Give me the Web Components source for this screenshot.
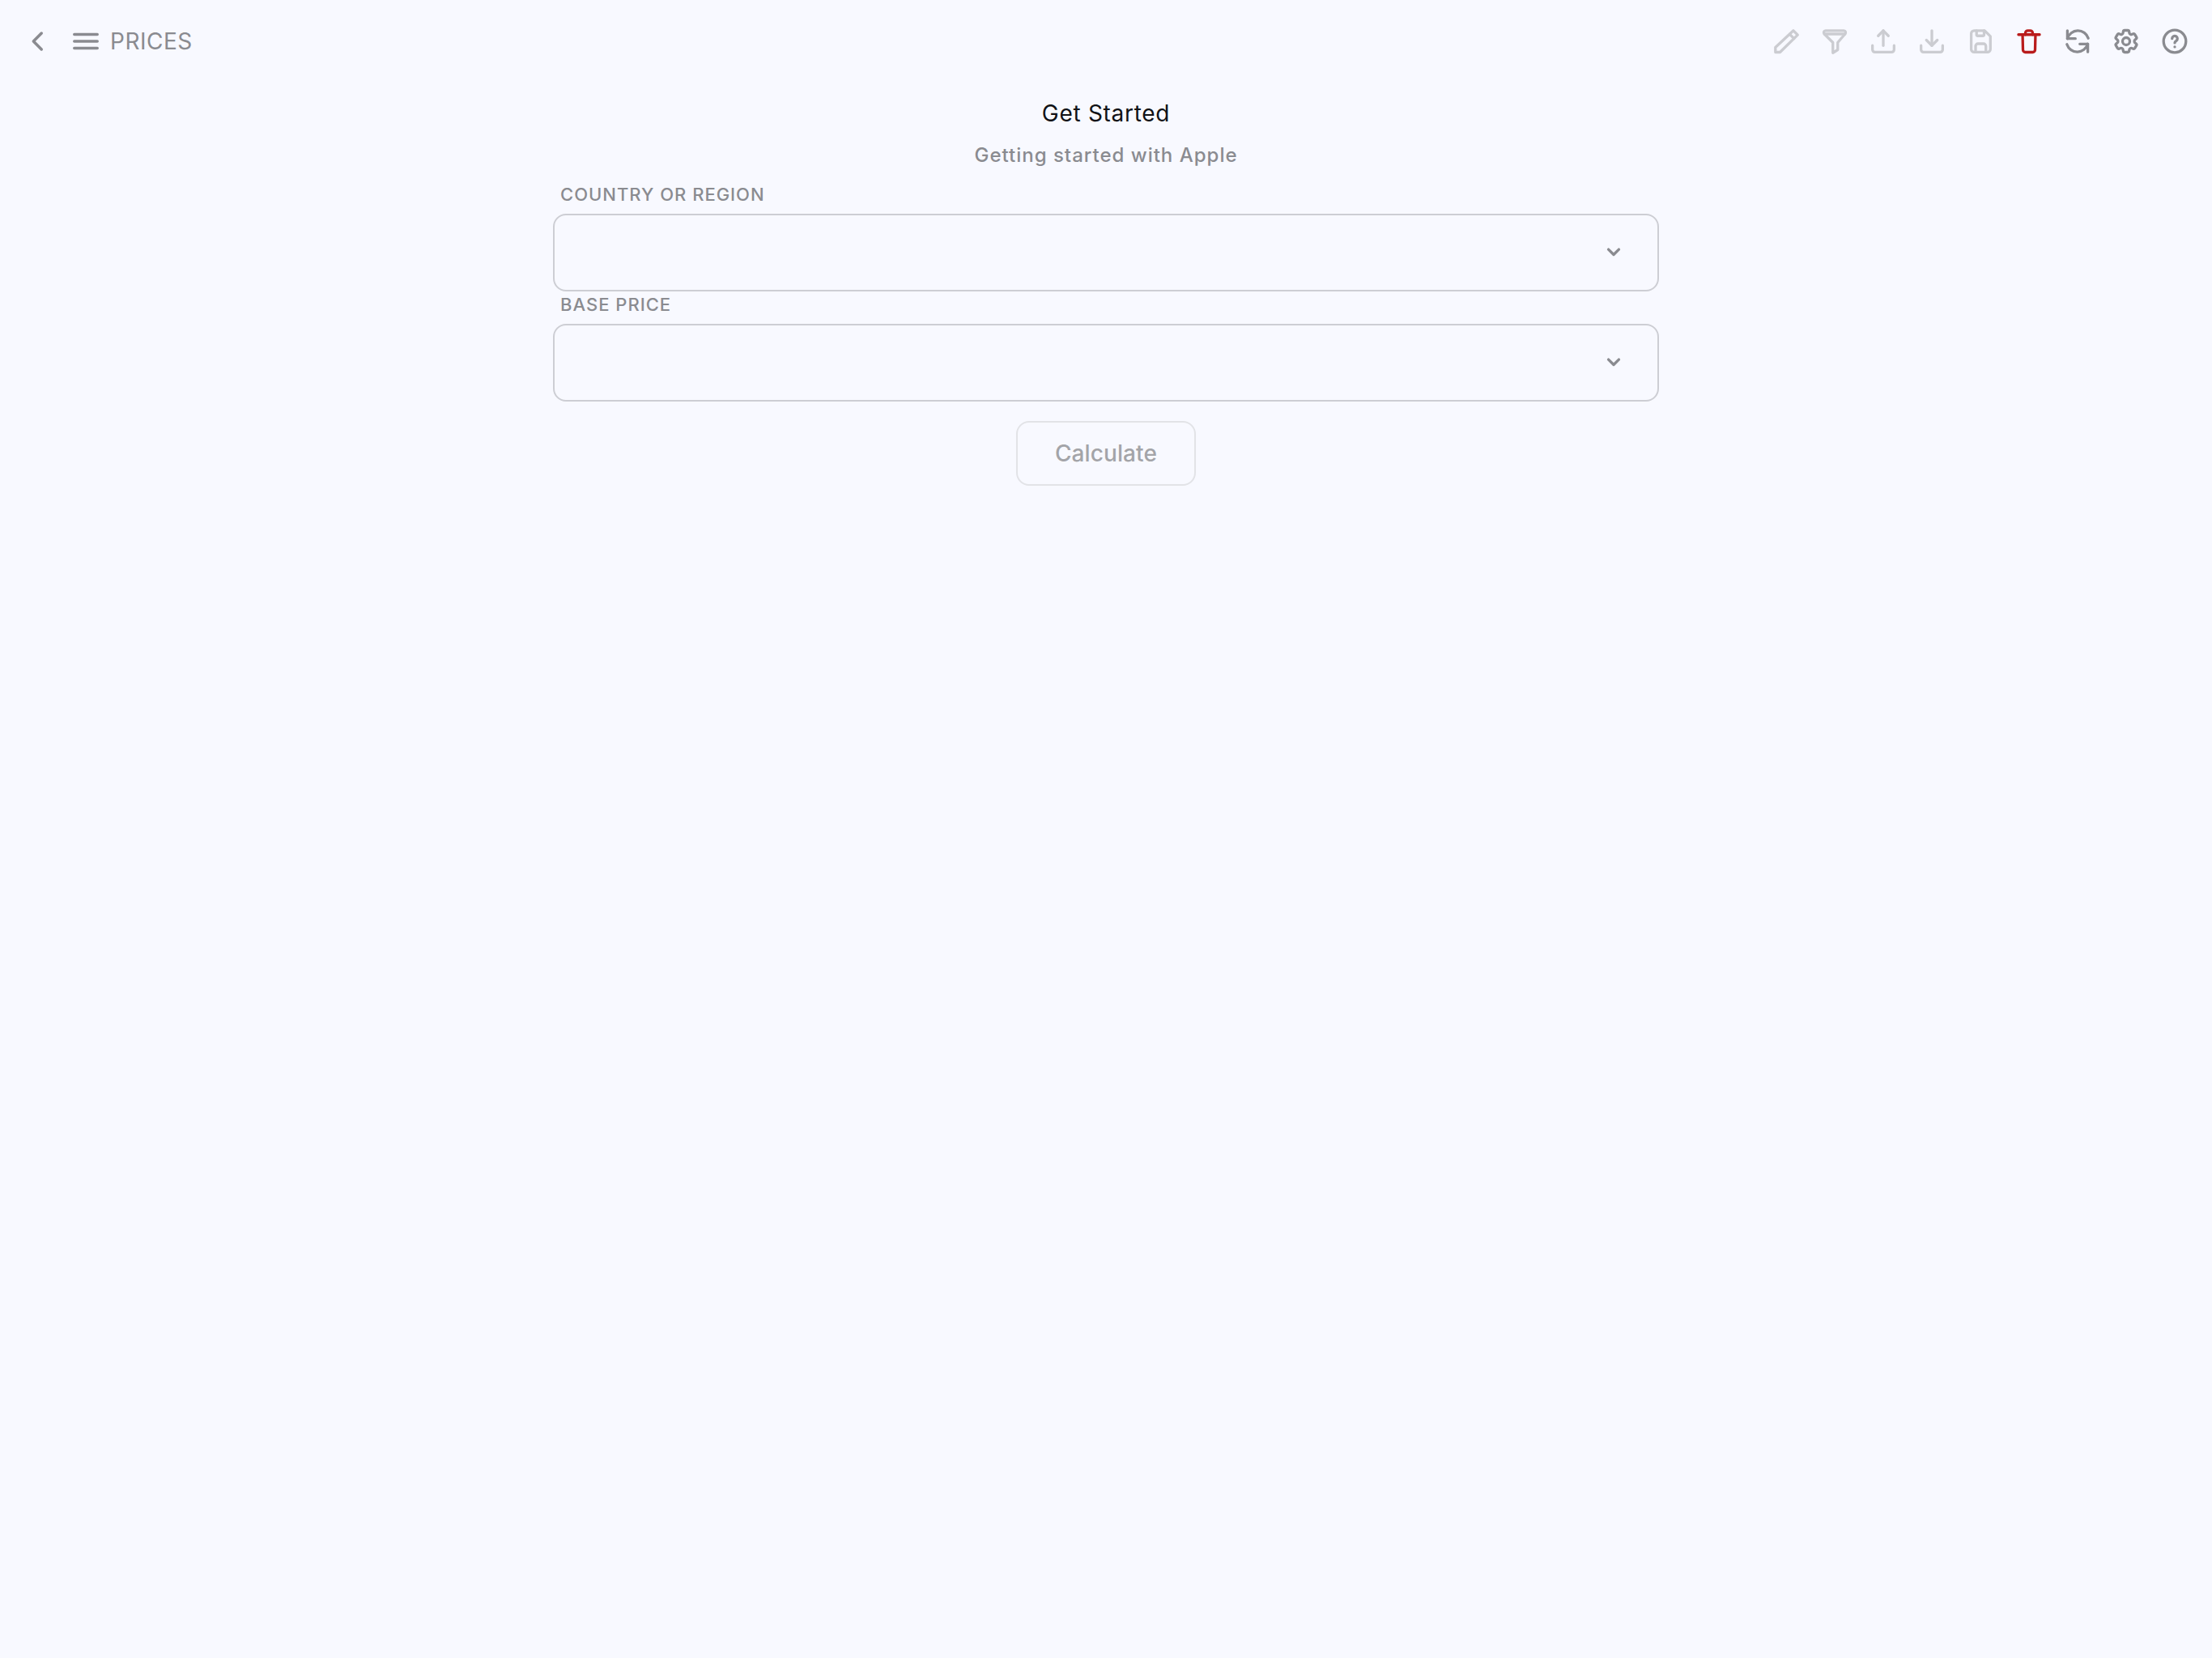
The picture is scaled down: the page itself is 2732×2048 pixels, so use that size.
<!DOCTYPE html>
<html>
<head>
<meta charset="utf-8">
<title>Prices</title>
<style>
    html, body {
        margin: 0;
        height: 100%;
        background: #f8f9ff;
        font-family: Inter, "Liberation Sans", sans-serif;
    }
</style>
</head>
<body>
<prices-page></prices-page>

<script>
const ICONS = {
    back: '<path d="M15 5l-7 7l7 7"/>',
    menu: '<path d="M2.500 6.300h19M2.500 12h19M2.500 17.700h19"/>',
    pencil: '<path d="M3.200 21V17L18 3.200L21.500 6.700L7 21Z"/><path d="M15 6.200L18.500 9.700"/>',
    filter: '<path d="M4.500 3.200H19.500C21 3.200 21.500 5 20.500 6L14.500 13V19L10.500 21.500V13L3.500 6C2.500 5 3 3.200 4.500 3.200Z"/><path d="M3.500 6H20.500"/>',
    upload: '<path d="M3.100 15.500V18.900a2 2 0 0 0 2 2H18.900a2 2 0 0 0 2-2V15.500"/><path d="M7.800 7.500L12 3.200L16.200 7.500"/><path d="M12 3.200V15.500"/>',
    download: '<path d="M3.100 15.500V18.900a2 2 0 0 0 2 2H18.900a2 2 0 0 0 2-2V15.500"/><path d="M7.500 11L12 15.500L16.500 11"/><path d="M12 3.200V15.500"/>',
    save: '<path d="M6.800 3.200H15.500L20.200 7.900V18.500a2.400 2.400 0 0 1-2.400 2.400H6.800a2.400 2.400 0 0 1-2.400-2.400V5.600a2.400 2.400 0 0 1 2.400-2.400Z"/><path d="M8.800 3.200V6.500a1 1 0 0 0 1 1H14a1 1 0 0 0 1-1V3.200"/><path d="M8 20.900V16a2 2 0 0 1 2-2H14.500a2 2 0 0 1 2 2V20.900"/>',
    trash: '<path d="M3.300 6.500H20.700"/><path d="M6.700 6.500L7 19a2 2 0 0 0 2 2H15a2 2 0 0 0 2-2L17.300 6.500"/><path d="M9 6.500V5.200a2 2 0 0 1 2-2H13a2 2 0 0 1 2 2V6.500"/>',
    refresh: '<path d="M3.600 3.200V9.800H10.200"/><path d="M3.600 9.800A9 9 0 0 1 20.800 9.500"/><path d="M20.400 20.800V14.200H13.800"/><path d="M20.400 14.200A9 9 0 0 1 3.200 14.500"/>',
    cog: '<path d="M9.594 3.940c.09-.542.56-.94 1.110-.94h2.593c.55 0 1.020.398 1.110.94l.213 1.281c.063.374.313.686.645.870.074.040.147.083.22.127.325.196.72.257 1.075.124l1.217-.456a1.125 1.125 0 0 1 1.370.49l1.296 2.247a1.125 1.125 0 0 1-.26 1.431l-1.003.827c-.293.241-.438.613-.43.992a7.723 7.723 0 0 1 0 .255c-.008.378.137.75.43.991l1.004.827c.424.35.534.955.26 1.430l-1.298 2.247a1.125 1.125 0 0 1-1.369.491l-1.217-.456c-.355-.133-.75-.072-1.076.124a6.470 6.470 0 0 1-.22.128c-.331.183-.581.495-.644.869l-.213 1.281c-.09.543-.56.94-1.110.94h-2.594c-.55 0-1.019-.398-1.110-.94l-.213-1.281c-.062-.374-.312-.686-.644-.87a6.520 6.520 0 0 1-.22-.127c-.325-.196-.72-.257-1.076-.124l-1.217.456a1.125 1.125 0 0 1-1.369-.49l-1.297-2.247a1.125 1.125 0 0 1 .26-1.431l1.004-.827c.292-.24.437-.613.43-.991a6.932 6.932 0 0 1 0-.255c.007-.38-.138-.751-.43-.992l-1.004-.827a1.125 1.125 0 0 1-.26-1.430l1.297-2.247a1.125 1.125 0 0 1 1.370-.491l1.216.456c.356.133.751.072 1.076-.124.072-.044.146-.086.22-.128.332-.183.582-.495.644-.869l.214-1.280Z"/><circle cx="12" cy="12" r="3"/>',
    help: '<circle cx="12" cy="12" r="9.200"/><path d="M9.800 9.800a2.200 2.200 0 1 1 3.500 1.800c-.8.5-1.300 1-1.300 1.700"/><path d="M12 16.600v.01"/>',
    chevron: '<path d="M6.500 8.700l5.500 5.500l5.500-5.500"/>'
};

class AppIcon extends HTMLElement {
    constructor() {
        super();
        this.attachShadow({mode: 'open'});
    }

    connectedCallback() {
        const name = this.getAttribute('name');
        const size = this.getAttribute('size') || 36;
        const stroke = this.getAttribute('stroke') || 2.2;
        this.shadowRoot.innerHTML = `
            <style>
                :host {
                    display: inline-flex;
                    align-items: center;
                    justify-content: center;
                    color: #8a8b90;
                }
                :host([faded]) { color: #cbccd1; }
                :host([danger]) { color: #b91c1c; }
                svg { display: block; }
            </style>
            <svg width="${size}" height="${size}" viewBox="0 0 24 24" fill="none" stroke="currentColor"
                 stroke-width="${stroke}" stroke-linecap="round" stroke-linejoin="round">${ICONS[name]}</svg>`
    }
}

class TopBar extends HTMLElement {
    constructor() {
        super();
        this.attachShadow({mode: 'open'});
        this.shadowRoot.innerHTML = `
            <style>
                :host {
                    display: flex;
                    align-items: center;
                    justify-content: space-between;
                    height: 102px;
                    padding: 0 28px 0 30px;
                    box-sizing: border-box;
                }
                .left { display: flex; align-items: center; }
                .title {
                    font-size: 28px;
                    letter-spacing: 0.5px;
                    color: #8a8b90;
                    margin-left: 12px;
                }
                .menu { margin-left: 24px; }
                .right { display: flex; align-items: center; gap: 24px; }
            </style>
            <div class="left">
                <app-icon name="back" size="34" stroke="2.500"></app-icon>
                <app-icon class="menu" name="menu" size="36" stroke="2.300"></app-icon>
                <span class="title"><slot></slot></span>
            </div>
            <div class="right">
                <app-icon name="pencil" faded></app-icon>
                <app-icon name="filter" faded></app-icon>
                <app-icon name="upload" faded></app-icon>
                <app-icon name="download" faded></app-icon>
                <app-icon name="save" faded></app-icon>
                <app-icon name="trash" danger></app-icon>
                <app-icon name="refresh"></app-icon>
                <app-icon name="cog"></app-icon>
                <app-icon name="help"></app-icon>
            </div>`
    }
}

class SelectField extends HTMLElement {
    constructor() {
        super();
        this.attachShadow({mode: 'open'});
        this.shadowRoot.innerHTML = `
            <style>
                :host { display: block; }
                label {
                    display: block;
                    height: 40px;
                    line-height: 32px;
                    padding-left: 9px;
                    font-size: 22px;
                    font-weight: 500;
                    letter-spacing: 1px;
                    color: #8a8b90;
                    text-transform: uppercase;
                }
                .box {
                    height: 96px;
                    box-sizing: border-box;
                    border: 2px solid #cdced4;
                    border-radius: 16px;
                    display: flex;
                    align-items: center;
                    justify-content: flex-end;
                    padding-right: 40px;
                }
            </style>
            <label><slot></slot></label>
            <div class="box"><app-icon name="chevron" size="28" stroke="2.900"></app-icon></div>`
    }
}

class ActionButton extends HTMLElement {
    constructor() {
        super();
        this.attachShadow({mode: 'open'});
        this.shadowRoot.innerHTML = `
            <style>
                :host {
                    display: inline-flex;
                    align-items: center;
                    justify-content: center;
                    width: 222px;
                    height: 80px;
                    box-sizing: border-box;
                    border: 2px solid #e2e3e7;
                    border-radius: 16px;
                    font-size: 28px;
                    font-weight: 500;
                    letter-spacing: 0.1px;
                    color: #a3a4a8;
                }
            </style>
            <slot></slot>`
    }
}

class PricesPage extends HTMLElement {
    constructor() {
        super();
        this.attachShadow({mode: 'open'});
        this.shadowRoot.innerHTML = `
            <style>
                :host { display: block; }
                main {
                    width: 1366px;
                    margin: 0 auto;
                    display: flex;
                    flex-direction: column;
                }
                .head { text-align: center; }
                h1 {
                    margin: 20px 0 0;
                    font-size: 28px;
                    line-height: 36px;
                    font-weight: 400;
                    letter-spacing: 0.7px;
                    color: #111216;
                }
                p {
                    margin: 16px 0 0;
                    font-size: 24px;
                    line-height: 36px;
                    font-weight: 500;
                    letter-spacing: 1px;
                    color: #8a8b90;
                }
                .fields { margin-top: 14px; }
                .action { display: flex; justify-content: center; margin-top: 24px; }
            </style>
            <top-bar>PRICES</top-bar>
            <main>
                <div class="head">
                    <h1>Get Started</h1>
                    <p>Getting started with Apple</p>
                </div>
                <div class="fields">
                    <select-field>Country or Region</select-field>
                    <select-field>Base Price</select-field>
                </div>
                <div class="action"><action-button>Calculate</action-button></div>
            </main>`
    }
}

customElements.define('app-icon', AppIcon);
customElements.define('top-bar', TopBar);
customElements.define('select-field', SelectField);
customElements.define('action-button', ActionButton);
customElements.define('prices-page', PricesPage);
</script>
</body>
</html>
